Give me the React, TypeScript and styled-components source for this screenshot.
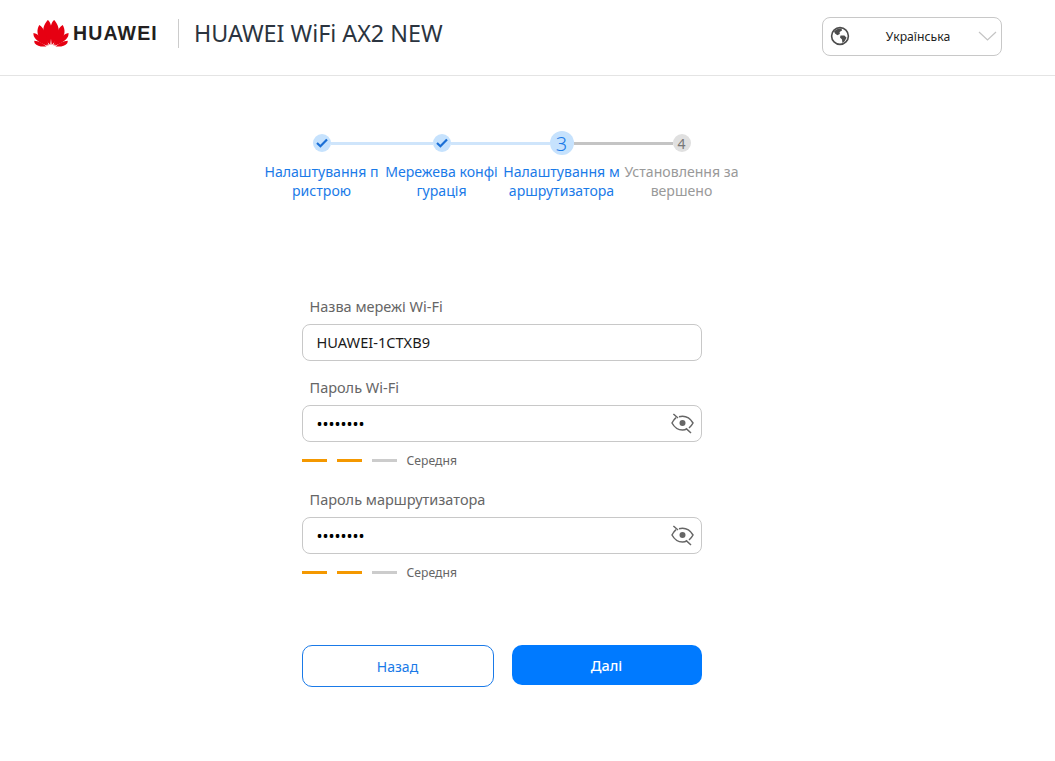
import React, { ReactElement } from 'react';
import styled, { createGlobalStyle } from 'styled-components';

const blue = '#1a7ae8';
const fontStack = '"Noto Sans", "Open Sans", sans-serif';

const GlobalStyle = createGlobalStyle`
  html, body {
    margin: 0;
    padding: 0;
    background: #ffffff;
  }
  body {
    font-family: ${fontStack};
  }
  * {
    box-sizing: border-box;
  }
`;

const Header = styled.header`
  height: 76px;
  display: flex;
  align-items: center;
  justify-content: space-between;
  padding: 0 53px 9px 33px;
  border-bottom: 1px solid #e4e4e4;
`;
const Brand = styled.div`
  display: flex;
  align-items: center;
`;
const BrandName = styled.span`
  margin-left: 4px;
  font-family: "Liberation Sans", sans-serif;
  font-size: 19.5px;
  font-weight: 700;
  letter-spacing: 1.15px;
  color: #231f20;
`;
const Divider = styled.span`
  width: 1px;
  height: 29px;
  margin: 0 15px 0 20px;
  background: #cccccc;
`;
const ProductName = styled.span`
  font-size: 23.3px;
  color: #2b3440;
  white-space: nowrap;
`;
const LangSelect = styled.div`
  width: 180px;
  height: 39px;
  margin-top: 6px;
  display: flex;
  align-items: center;
  padding: 0 4px 0 7px;
  border: 1px solid #c8c8c8;
  border-radius: 8px;
`;
const LangText = styled.span`
  flex: 1;
  padding-left: 8px;
  text-align: center;
  font-size: 12.2px;
  color: #222222;
`;

const Main = styled.main`
  display: flex;
  flex-direction: column;
  align-items: center;
  padding: 55px 52px 0 0;
`;
const Stepper = styled.div`
  width: 480px;
  display: flex;
`;
const Step = styled.div`
  width: 120px;
  display: flex;
  flex-direction: column;
  align-items: center;
`;
const Track = styled.div`
  width: 100%;
  height: 24px;
  display: flex;
  align-items: center;
`;
const Connector = styled.span<{ $color: string }>`
  flex: 1;
  height: 3px;
  background: ${(props) => props.$color};
`;
const Dot = styled.span<{ $size: number; $bg: string; $color: string }>`
  width: ${(props) => props.$size}px;
  height: ${(props) => props.$size}px;
  flex: none;
  display: flex;
  align-items: center;
  justify-content: center;
  border-radius: 50%;
  font-size: ${(props) => (props.$size > 20 ? 20 : 14)}px;
  font-weight: ${(props) => (props.$size > 20 ? 300 : 400)};
  background: ${(props) => props.$bg};
  color: ${(props) => props.$color};
`;
const StepLabel = styled.div<{ $active: boolean }>`
  width: 117px;
  margin-top: 7px;
  text-align: center;
  font-size: 14.1px;
  line-height: 19px;
  word-break: break-all;
  color: ${(props) => (props.$active ? blue : '#999999')};
`;

const Form = styled.form`
  width: 400px;
  margin-top: 96px;
`;
const Field = styled.div`
  margin-bottom: 16px;
`;
const Label = styled.label`
  display: block;
  height: 20px;
  margin-bottom: 8px;
  padding-left: 8px;
  font-size: 14.5px;
  line-height: 20px;
  color: #666666;
`;
const InputBox = styled.div`
  height: 37px;
  display: flex;
  align-items: center;
  padding: 0 7px 0 14px;
  border: 1px solid #c8c8c8;
  border-radius: 8px;
`;
const Input = styled.input`
  flex: 1;
  min-width: 0;
  border: none;
  outline: none;
  padding: 0 0 2px;
  background: transparent;
  font-family: ${fontStack};
  font-size: 14.6px;
  color: #1a1a1a;

  &[type='password'] {
    padding: 0;
    font-size: 16px;
    color: #000000;
  }
`;
const Strength = styled.div`
  height: 19px;
  margin-top: 9px;
  margin-bottom: 19px;
  display: flex;
  align-items: center;
  gap: 10px;
`;
const StrengthBar = styled.span<{ $on: boolean }>`
  width: 25px;
  height: 3px;
  background: ${(props) => (props.$on ? '#f49800' : '#cccccc')};
`;
const StrengthText = styled.span`
  font-size: 12.2px;
  color: #666666;
`;
const Buttons = styled.div`
  margin-top: 63px;
  display: flex;
  align-items: flex-start;
  justify-content: space-between;
`;
const BackButton = styled.button`
  width: 192px;
  height: 42px;
  border: 1px solid ${blue};
  border-radius: 10px;
  background: #ffffff;
  font-family: ${fontStack};
  font-size: 14px;
  color: ${blue};
`;
const NextButton = styled.button`
  width: 190px;
  height: 40px;
  border: none;
  border-radius: 10px;
  background: #007aff;
  font-family: ${fontStack};
  font-size: 14.4px;
  font-weight: 500;
  color: #ffffff;
`;

function HuaweiLogo(): ReactElement {
  const petals = [
    'M17.2 25.5 C11 20 9.6 13.5 10.2 9 C10.8 4.5 13.6 1.2 14.8 0 C17.2 1.6 18.8 6.5 18.6 11.5 C18.4 16.5 17.7 22 17.2 25.5Z',
    'M15.6 26 C8.5 22 4.6 17 4.2 12.6 C3.9 9.6 5 6.6 6 5 C8.5 6.2 10.6 9.6 11.8 12.8 C13.4 17 14.7 21.6 15.6 26Z',
    'M14.6 26.2 C8 24.4 2.2 20.5 .6 16.8 C.1 15.6 0 14.2 .1 13.4 C3.4 14 7.6 16.8 9.8 19.4 C11.8 21.6 13.4 24 14.6 26.2Z',
    'M13.4 27 C8 27.6 3.4 26.6 1.6 24 C1.1 23.4 .9 22 .9 21.2 C5.4 21.4 9.6 23.6 13.4 27Z',
  ];
  return (
    <svg width="36" height="27" viewBox="0 0 36 27.6" fill="#e60012">
      {petals.map((d) => (
        <React.Fragment key={d}>
          <path d={d} />
          <path d={d} transform="matrix(-1 0 0 1 36 0)" />
        </React.Fragment>
      ))}
    </svg>
  );
}

function GlobeIcon(): ReactElement {
  return (
    <svg width="20" height="20" viewBox="0 0 20 20">
      <circle cx="10" cy="10" r="8.4" fill="none" stroke="#4d4d4d" strokeWidth="1.6" />
      <path
        d="M4 5.5 C6 3 9 2.2 11.5 2.6 L12 4.6 L9.6 6 L9.8 8 L7.4 9.2 L5 7.6Z M10.5 9.6 L14.4 9.4 L16.6 11.8 L14.4 15.4 L12.4 17 L12 13.6 L10 11.6Z"
        fill="#4d4d4d"
      />
    </svg>
  );
}

function ChevronIcon(): ReactElement {
  return (
    <svg width="19" height="10" viewBox="0 0 19 10">
      <path d="M1 1 L9.5 9 L18 1" fill="none" stroke="#c4c4c4" strokeWidth="1.2" />
    </svg>
  );
}

function CheckIcon(): ReactElement {
  return (
    <svg width="12" height="10" viewBox="0 0 12 10">
      <path d="M1 5 L4.4 8.2 L11 1.4" fill="none" stroke="#1a6fd6" strokeWidth="2.2" />
    </svg>
  );
}

function EyeOffIcon(): ReactElement {
  return (
    <svg width="23" height="21" viewBox="0 0 23 21" fill="none" stroke="#666666" strokeWidth="1.5">
      <path d="M5 4.6 C3.4 6 2 8 1 10 C3.4 14.4 7 17 11.5 17 C13 17 14.4 16.7 15.7 16 M8 3.8 C9 3.5 10.2 3.3 11.5 3.3 C16 3.3 19.6 6 22 10 C21 12 19.6 13.6 18 15" />
      <circle cx="11.5" cy="10" r="3" fill="#666666" stroke="none" />
      <path d="M2.4 1 L7 5 M15 15.4 L20 20" />
    </svg>
  );
}

interface StepInfo {
  label: string;
  state: 'done' | 'active' | 'todo';
}

const steps: StepInfo[] = [
  { label: 'Налаштування пристрою', state: 'done' },
  { label: 'Мережева конфігурація', state: 'done' },
  { label: 'Налаштування маршрутизатора', state: 'active' },
  { label: 'Установлення завершено', state: 'todo' },
];

function StepDot({ index, state }: { index: number; state: StepInfo['state'] }): ReactElement {
  if (state === 'done') {
    return (
      <Dot $size={18} $bg="#c6e2fd" $color={blue}>
        <CheckIcon />
      </Dot>
    );
  }
  if (state === 'active') {
    return (
      <Dot $size={24} $bg="#c6e2fd" $color={blue}>
        {index + 1}
      </Dot>
    );
  }
  return (
    <Dot $size={18} $bg="#e0e0e0" $color="#777777">
      {index + 1}
    </Dot>
  );
}

function StrengthMeter(): ReactElement {
  return (
    <Strength>
      <StrengthBar $on />
      <StrengthBar $on />
      <StrengthBar $on={false} />
      <StrengthText>Середня</StrengthText>
    </Strength>
  );
}

function PasswordField({ label }: { label: string }): ReactElement {
  return (
    <>
      <Label>{label}</Label>
      <InputBox>
        <Input type="password" value="12345678" readOnly />
        <EyeOffIcon />
      </InputBox>
      <StrengthMeter />
    </>
  );
}

export default function App(): ReactElement {
  return (
    <>
      <GlobalStyle />
      <Header>
        <Brand>
          <HuaweiLogo />
          <BrandName>HUAWEI</BrandName>
          <Divider />
          <ProductName>HUAWEI WiFi AX2 NEW</ProductName>
        </Brand>
        <LangSelect>
          <GlobeIcon />
          <LangText>Українська</LangText>
          <ChevronIcon />
        </LangSelect>
      </Header>
      <Main>
        <Stepper>
          {steps.map((step, index) => (
            <Step key={step.label}>
              <Track>
                <Connector
                  $color={
                    index === 0 ? 'transparent' : step.state === 'todo' ? '#c4c4c4' : '#cfe5fb'
                  }
                />
                <StepDot index={index} state={step.state} />
                <Connector
                  $color={
                    index === 3
                      ? 'transparent'
                      : step.state === 'done'
                        ? '#cfe5fb'
                        : '#c4c4c4'
                  }
                />
              </Track>
              <StepLabel $active={step.state !== 'todo'}>{step.label}</StepLabel>
            </Step>
          ))}
        </Stepper>
        <Form>
          <Field>
            <Label>Назва мережі Wi-Fi</Label>
            <InputBox>
              <Input type="text" value="HUAWEI-1CTXB9" readOnly />
            </InputBox>
          </Field>
          <PasswordField label="Пароль Wi-Fi" />
          <PasswordField label="Пароль маршрутизатора" />
          <Buttons>
            <BackButton type="button">Назад</BackButton>
            <NextButton type="button">Далі</NextButton>
          </Buttons>
        </Form>
      </Main>
    </>
  );
}
